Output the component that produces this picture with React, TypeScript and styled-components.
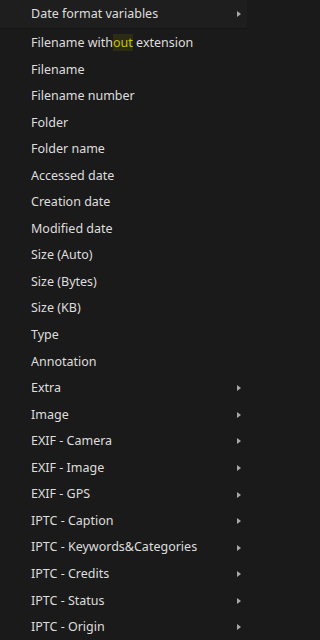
import React from "react";
import styled, { createGlobalStyle } from "styled-components";

const Global = createGlobalStyle`
  html, body { margin: 0; padding: 0; background: #1a1a1a; }
  body { font-family: "Noto Sans", "Segoe UI", sans-serif; }
`;

const Menu = styled.div`
  width: 247px;
  height: 640px;
  overflow: hidden;
  background: #1a1a1a;
  display: flex;
  flex-direction: column;
`;

const Header = styled.div`
  height: 28px;
  background: #1e1e1e;
  border-bottom: 1px solid #161616;
  margin-bottom: 1px;
  display: flex;
  align-items: center;
  padding: 0 6px 0 31px;
  box-sizing: content-box;
  flex-shrink: 0;
`;

const Row = styled.div`
  height: 26.55px;
  display: flex;
  align-items: center;
  padding: 0 6px 0 31px;
  box-sizing: border-box;
  flex-shrink: 0;
`;

const Label = styled.span`
  flex: 1;
  color: #dedede;
  font-size: 12.5px;
  line-height: 1;
  white-space: nowrap;
`;

const Hit = styled.span`
  color: #c8c400;
  background: #2c2c14;
`;

const Arrow = styled.span`
  width: 0;
  height: 0;
  border-top: 3.5px solid transparent;
  border-bottom: 3.5px solid transparent;
  border-left: 4px solid #a8a8a8;
`;

const items: [string, boolean][] = [
  ["Filename", false],
  ["Filename number", false],
  ["Folder", false],
  ["Folder name", false],
  ["Accessed date", false],
  ["Creation date", false],
  ["Modified date", false],
  ["Size (Auto)", false],
  ["Size (Bytes)", false],
  ["Size (KB)", false],
  ["Type", false],
  ["Annotation", false],
  ["Extra", true],
  ["Image", true],
  ["EXIF - Camera", true],
  ["EXIF - Image", true],
  ["EXIF - GPS", true],
  ["IPTC - Caption", true],
  ["IPTC - Keywords&Categories", true],
  ["IPTC - Credits", true],
  ["IPTC - Status", true],
  ["IPTC - Origin", true],
];

export default function App() {
  return (
    <>
      <Global />
      <Menu>
        <Header>
          <Label>Date format variables</Label>
          <Arrow />
        </Header>
        <Row>
          <Label>
            Filename with<Hit>out</Hit> extension
          </Label>
        </Row>
        {items.map(([t, sub]) => (
          <Row key={t}>
            <Label>{t}</Label>
            {sub && <Arrow />}
          </Row>
        ))}
      </Menu>
    </>
  );
}
